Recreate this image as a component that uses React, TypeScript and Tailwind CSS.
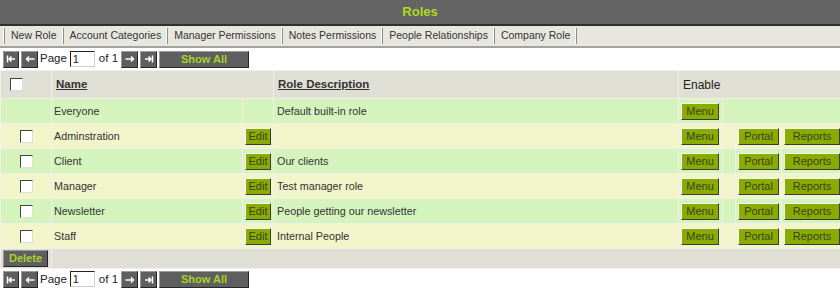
import React from "react";

interface Role {
  name: string;
  description: string;
  builtIn?: boolean;
}

const roles: Role[] = [
  { name: "Everyone", description: "Default built-in role", builtIn: true },
  { name: "Adminstration", description: "" },
  { name: "Client", description: "Our clients" },
  { name: "Manager", description: "Test manager role" },
  { name: "Newsletter", description: "People getting our newsletter" },
  { name: "Staff", description: "Internal People" },
];

const tabs = [
  "New Role",
  "Account Categories",
  "Manager Permissions",
  "Notes Permissions",
  "People Relationships",
  "Company Role",
];

const font = { fontFamily: '"Liberation Sans", Arial, sans-serif' };

const PagerIcon = ({ kind }: { kind: "first" | "prev" | "next" | "last" }) => (
  <svg width="10" height="8" viewBox="0 0 10 8" fill="none" stroke="white" strokeWidth="1.5">
    {kind === "first" && (
      <>
        <path d="M1.5 0.5v7" />
        <path d="M3 4h6M5.5 1.5 3 4l2.5 2.5" />
      </>
    )}
    {kind === "prev" && <path d="M1.5 4h8M4 1.5 1.5 4 4 6.5" />}
    {kind === "next" && <path d="M0.5 4h8M6 1.5 8.5 4 6 6.5" />}
    {kind === "last" && (
      <>
        <path d="M8.5 0.5v7" />
        <path d="M1 4h6M4.5 1.5 7 4 4.5 6.5" />
      </>
    )}
  </svg>
);

const DarkButton = ({ children, className = "" }: { children: React.ReactNode; className?: string }) => (
  <button
    className={`flex items-center justify-center bg-[#5f5f5f] border border-t-[#9a9a9a] border-l-[#9a9a9a] border-b-[#262626] border-r-[#262626] ${className}`}
  >
    {children}
  </button>
);

const Pager = ({ className = "" }: { className?: string }) => (
  <div className={`flex items-center h-[20px] pl-[3px] text-[11.5px] text-[#222] ${className}`} style={font}>
    <DarkButton className="w-[16px] h-[17px]">
      <PagerIcon kind="first" />
    </DarkButton>
    <DarkButton className="w-[17px] h-[17px] ml-[2px]">
      <PagerIcon kind="prev" />
    </DarkButton>
    <span className="ml-[2px]">Page</span>
    <input
      defaultValue="1"
      className="ml-[3px] w-[25px] h-[16px] px-[2px] text-[11px] bg-white border border-t-[#222] border-l-[#222] border-b-[#ccc] border-r-[#ccc] outline-none"
    />
    <span className="ml-[4px]">of 1</span>
    <DarkButton className="w-[17px] h-[17px] ml-[3px]">
      <PagerIcon kind="next" />
    </DarkButton>
    <DarkButton className="w-[17px] h-[17px] ml-[2px]">
      <PagerIcon kind="last" />
    </DarkButton>
    <DarkButton className="w-[90px] h-[17px] ml-[2px] text-[11px] font-bold text-[#a9d22c]">
      Show All
    </DarkButton>
  </div>
);

const OliveButton = ({ children, className = "" }: { children: React.ReactNode; className?: string }) => (
  <button
    className={`h-[17px] bg-[#8aab00] text-[11px] text-[#3b4220] leading-none border border-t-[#f4f4f4] border-l-[#f4f4f4] border-b-[#3a3a3a] border-r-[#3a3a3a] ${className}`}
  >
    {children}
  </button>
);

const Checkbox = () => (
  <span className="block w-[13px] h-[13px] bg-white border border-t-[#444] border-l-[#444] border-b-[#ddd] border-r-[#ddd]" />
);

const cell = "border border-[#f1f1ea] p-0 align-middle";

export default function App() {
  return (
    <div className="w-[840px] h-[288px] bg-white overflow-hidden text-[#333]" style={font}>
      {/* Title bar */}
      <div className="h-[26px] bg-[#646464] border-b-2 border-[#2f2f2f] flex items-center justify-center">
        <h1 className="text-[13px] font-bold text-[#b0da1e]">Roles</h1>
      </div>

      {/* Tabs */}
      <div className="h-[22px] bg-[#e7e7df] border-b-2 border-[#a3a3a3] flex items-center pl-[3px]">
        {tabs.map((t) => (
          <div
            key={t}
            className="h-[16px] flex items-center border-l border-white shadow-[inset_1px_0_0_#8d8d8d] pl-[7px] pr-[5px] text-[10.5px] text-[#333]"
          >
            {t}
          </div>
        ))}
        <div className="h-[16px] w-[2px] border-l border-white shadow-[inset_1px_0_0_#8d8d8d]" />
      </div>

      <Pager className="mt-[1px]" />

      {/* Roles table */}
      <table className="mt-[1px] w-[841px] table-fixed border-collapse text-[10.75px]">
        <colgroup>
          <col className="w-[51px]" />
          <col className="w-[191px]" />
          <col className="w-[31px]" />
          <col className="w-[405px]" />
          <col className="w-[44px]" />
          <col className="w-[13px]" />
          <col className="w-[46px]" />
          <col className="w-[60px]" />
        </colgroup>
        <thead>
          <tr className="h-[28px] bg-[#dfdfd6]">
            <th className={`${cell} pl-[9px]`}>
              <Checkbox />
            </th>
            <th colSpan={2} className={`${cell} text-left pl-[4px] font-bold underline text-[11.5px]`}>
              Name
            </th>
            <th className={`${cell} text-left pl-[4px] font-bold underline text-[11.5px]`}>Role Description</th>
            <th colSpan={4} className={`${cell} text-left pl-[4px] font-normal text-[12px] text-[#222]`}>
              Enable
            </th>
          </tr>
        </thead>
        <tbody>
          {roles.map((r, i) => (
            <tr key={r.name} className={`h-[25px] ${i % 2 === 0 ? "bg-[#d5f3bd]" : "bg-[#f2f5ca]"}`}>
              <td className={cell}>
                {!r.builtIn && (
                  <div className="flex justify-center pl-[1px]">
                    <Checkbox />
                  </div>
                )}
              </td>
              <td className={`${cell} pl-[2px]`}>{r.name}</td>
              <td className={`${cell} pl-[2px]`}>
                {!r.builtIn && <OliveButton className="w-[26px]">Edit</OliveButton>}
              </td>
              <td className={`${cell} pl-[3px]`}>{r.description}</td>
              <td className={`${cell} pl-[2px]`}>
                <OliveButton className="w-[38px]">Menu</OliveButton>
              </td>
              {r.builtIn ? (
                <td colSpan={3} className={cell} />
              ) : (
                <>
                  <td className={cell} />
                  <td className={`${cell} pl-[2px]`}>
                    <OliveButton className="w-[41px]">Portal</OliveButton>
                  </td>
                  <td className={`${cell} pl-[2px]`}>
                    <OliveButton className="w-[56px]">Reports</OliveButton>
                  </td>
                </>
              )}
            </tr>
          ))}
          <tr className="h-[20px] bg-[#dfdfd6]">
            <td className={`${cell} pl-[2px]`}>
              <DarkButton className="w-[45px] h-[17px] text-[11px] font-bold text-[#a9d22c]">Delete</DarkButton>
            </td>
            <td colSpan={7} className={cell} />
          </tr>
        </tbody>
      </table>

      <Pager className="mt-[2px] items-start" />
    </div>
  );
}
